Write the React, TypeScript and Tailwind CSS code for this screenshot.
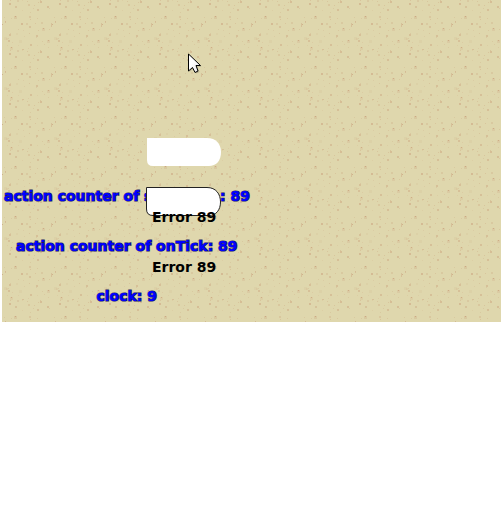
const specks = [
  [7,3,2,.6],[8,0,1,.4],[15,0,2,.3],[13,6,2,.45],[26,4,2,.35],[25,1,1,.4],[36,2,1,.4],[32,5,1,.4],[35,9,2,.5],[45,6,2,.55],[38,1,2,.55],[38,0,1,.4],[31,8,1,.3],[47,8,1,.3],[28,12,1,.3],[20,10,1,.2],
  [13,16,1,1],[12,16,3,.3],[27,16,2,.35],[28,19,1,.4],[2,17,1,.3],[9,18,1,.3],[35,18,1,.35],[3,21,1,.6],[3,22,1,.5],[19,23,2,.6],[24,23,2,.3],[0,24,1,.8],[33,23,1,.4],[39,22,2,.3],[49,23,2,.45],[49,25,2,.5],
  [41,28,1,.9],[40,28,3,.25],[27,26,2,.45],[16,29,1,.3],[21,30,1,.25],[36,30,1,.35],[47,29,1,.35],[7,34,2,.5],[8,33,1,.3],[14,33,2,.15],[27,33,1,.4],[34,35,2,.5],[34,37,1,.3],[2,37,3,.15],[4,38,2,.2],[22,36,1,.25],
  [6,40,2,.5],[6,38,1,.3],[10,42,1,.25],[17,40,3,.15],[46,40,1,.9],[45,40,3,.25],[28,44,2,.5],[40,41,1,.3],[42,44,1,.3],[35,45,1,.2],[9,47,1,.9],[8,47,3,.2],[20,49,2,.5],[20,0,1,.2],[46,47,1,.3],[26,48,1,.25],[5,45,1,.2],[16,45,1,.2],
];

export default function App() {
  return (
    <div className="h-[507px] w-[501px] overflow-hidden bg-white pl-[2px]">
      <div className="relative h-[322px] w-full overflow-hidden bg-[#dfd7ad] font-['DejaVu_Sans',sans-serif] text-[14px] font-bold">
        <svg className="absolute inset-0 h-full w-full">
          <defs>
            <pattern id="sand" width="50" height="50" patternUnits="userSpaceOnUse">
              {specks.map(([x, y, s, o], i) => (
                <rect key={i} x={x} y={y} width={s} height={s} fill="#cba47e" opacity={o} />
              ))}
            </pattern>
            <linearGradient id="pointer" x1="0" y1="0" x2="1" y2="1">
              <stop offset=".4" stopColor="#fff" />
              <stop offset="1" stopColor="#e5e5e5" />
            </linearGradient>
          </defs>
          <rect width="499" height="322" fill="url(#sand)" opacity=".9" />
          <g className="[paint-order:stroke]" fill="#00f" stroke="#1c1c60" strokeWidth="1.2">
            <text x="2" y="201">action counter of s</text>
            <text x="218" y="201">: 89</text>
            <text x="14" y="251">action counter of onTick: 89</text>
            <text x="94.5" y="301">clock: 9</text>
          </g>
          <path d="M145 138H205C214 138 219 144 219 152C219 161 214 166 207 166H151Q145 166 145 160Z" fill="#fff" />
          <path d="M144.5 187.5H205C214 187.5 218.5 194 218.5 202C218.5 210 214 215.5 207 215.5H151Q144.5 215.5 144.5 209Z" fill="#fff" stroke="#222" />
          <text x="150" y="222">Error 89</text>
          <text x="150" y="272">Error 89</text>
          <path d="M187.5 54.5V72L191.5 68.5L194.5 73.5L197.5 72L195 66.5H199.5Z" fill="#000" opacity=".2" />
          <path d="M186.5 54V71L190.5 67.5L193 72.5L196 71L194 65.5H198.5Z" fill="url(#pointer)" stroke="#000" />
        </svg>
      </div>
    </div>
  );
}
